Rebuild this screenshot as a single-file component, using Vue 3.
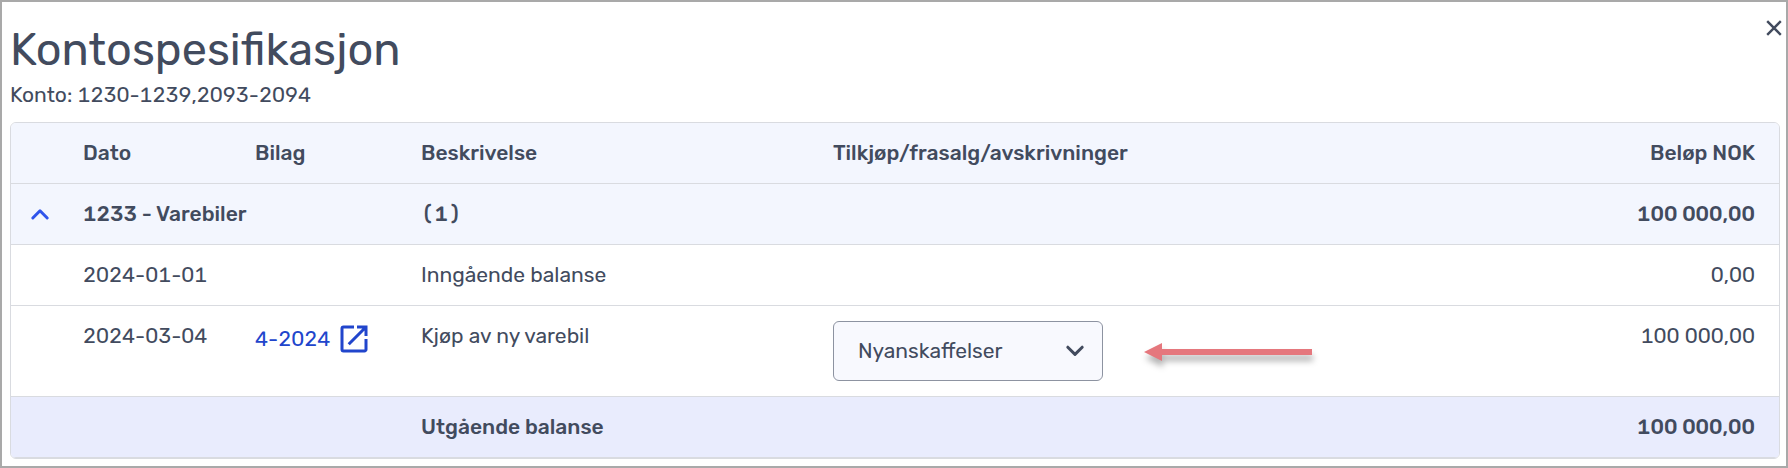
<script setup>
import { ref } from 'vue'

const expanded = ref(true)
const category = ref('Nyanskaffelser')
const categories = ['Nyanskaffelser', 'Tilkjøp', 'Frasalg', 'Avskrivninger']
</script>

<template>
  <section class="dialog" role="dialog" aria-labelledby="dialog-title">
    <header class="head">
      <div class="titles">
        <h1 id="dialog-title">Kontospesifikasjon</h1>
        <p>Konto: 1230-1239,2093-2094</p>
      </div>
      <button class="close" type="button" aria-label="Lukk">
        <svg width="16" height="16" viewBox="0 0 16 16" fill="none" stroke="currentColor" stroke-width="2.4">
          <path d="M1.2 1.2 14.8 14.8M14.8 1.2 1.2 14.8" />
        </svg>
      </button>
    </header>

    <div class="frame">
      <table>
        <colgroup>
          <col class="c-toggle" />
          <col class="c-date" />
          <col class="c-voucher" />
          <col class="c-text" />
          <col />
          <col class="c-amount" />
        </colgroup>
        <thead>
          <tr class="tint">
            <td></td>
            <th scope="col">Dato</th>
            <th scope="col">Bilag</th>
            <th scope="col">Beskrivelse</th>
            <th scope="col">Tilkjøp/frasalg/avskrivninger</th>
            <th scope="col" class="amount">Beløp NOK</th>
          </tr>
        </thead>
        <tbody>
          <tr class="tint strong">
            <td class="toggle">
              <button type="button" aria-label="Vis detaljer" :aria-expanded="expanded" @click="expanded = !expanded">
                <svg width="20" height="14" viewBox="0 0 20 14" fill="none" stroke="currentColor" stroke-width="3" stroke-linecap="round" stroke-linejoin="round">
                  <path d="M2.8 11 10 3.8 17.2 11" />
                </svg>
              </button>
            </td>
            <td colspan="2">1233 - Varebiler</td>
            <td>(1)</td>
            <td></td>
            <td class="amount">100 000,00</td>
          </tr>
          <tr v-if="expanded">
            <td></td>
            <td>2024-01-01</td>
            <td></td>
            <td>Inngående balanse</td>
            <td></td>
            <td class="amount">0,00</td>
          </tr>
          <tr v-if="expanded">
            <td></td>
            <td>2024-03-04</td>
            <td>
              <a class="voucher" href="#">
                4-2024
                <svg width="36" height="36" viewBox="0 0 24 24" fill="currentColor" aria-hidden="true">
                  <path d="M19 19H5V5h7V3H5a2 2 0 0 0-2 2v14a2 2 0 0 0 2 2h14c1.100 0 2-.9 2-2v-7h-2v7zM14 3v2h3.590l-9.830 9.830 1.410 1.410L19 6.410V10h2V3h-7z" />
                </svg>
              </a>
            </td>
            <td>Kjøp av ny varebil</td>
            <td>
              <div class="choice">
                <span class="select">
                  <select v-model="category" aria-label="Tilkjøp/frasalg/avskrivninger">
                    <option v-for="c in categories" :key="c">{{ c }}</option>
                  </select>
                  <svg width="20" height="14" viewBox="0 0 20 14" fill="none" stroke="currentColor" stroke-width="3" stroke-linecap="round" stroke-linejoin="round" aria-hidden="true">
                    <path d="M2.800 3.200 10 10.400 17.200 3.200" />
                  </svg>
                </span>
                <svg class="arrow" width="168" height="20" viewBox="0 0 168 20" aria-hidden="true">
                  <path d="M0 11 18 2v6h150v6H18v6z" fill="#e5777d" />
                </svg>
              </div>
            </td>
            <td class="amount">100 000,00</td>
          </tr>
        </tbody>
        <tfoot>
          <tr class="total strong">
            <td></td>
            <td></td>
            <td></td>
            <td>Utgående balanse</td>
            <td></td>
            <td class="amount">100 000,00</td>
          </tr>
        </tfoot>
      </table>
    </div>
  </section>
</template>

<style>
body {
  margin: 0;
  background: #fff;
}
</style>

<style scoped>
.dialog {
  box-sizing: border-box;
  padding: 0 6px 7px 8px;
  border: 2px solid #a9a9a9;
  background: #fff;
  color: #424b5e;
  font: 400 21px/30px Rubik, Inter, sans-serif;
  font-variant-numeric: tabular-nums;
}

.head {
  display: flex;
  justify-content: space-between;
  align-items: flex-start;
  padding: 18px 0 12px;
}

.titles {
  padding-top: 2px;
}

h1 {
  margin: 0 0 2px;
  font-size: 45px;
  line-height: 56px;
  font-weight: 400;
}

p {
  margin: 0;
}

button {
  display: flex;
  padding: 0;
  border: 0;
  background: none;
  color: inherit;
  cursor: pointer;
}

.close {
  margin-right: -2px;
}

.frame {
  overflow: hidden;
  border: 1px solid #d9dbe0;
  border-radius: 6px;
}

table {
  width: 100%;
  table-layout: fixed;
  border-collapse: separate;
  border-spacing: 0;
}

.c-toggle {
  width: 48px;
}

.c-date {
  width: 172px;
}

.c-voucher {
  width: 166px;
}

.c-text {
  width: 412px;
}

.c-amount {
  width: 240px;
}

th,
td {
  padding: 15px 0 15px 24px;
  border-bottom: 1px solid #d9dbe0;
  text-align: left;
  vertical-align: top;
  white-space: nowrap;
}

th,
.strong td {
  font-weight: 500;
}

.tint {
  background: #f3f6fe;
}

.total {
  background: #e9ecfd;
}

th.amount,
td.amount {
  padding-right: 24px;
  text-align: right;
}

td.toggle {
  padding-left: 19px;
}

.toggle button {
  height: 30px;
  align-items: center;
  color: #2f54eb;
}

.voucher {
  display: flex;
  align-items: center;
  gap: 6px;
  height: 36px;
  color: #2145cc;
  text-decoration: none;
}

.choice {
  display: flex;
  align-items: center;
  gap: 41px;
}

.select {
  position: relative;
  display: flex;
}

select {
  box-sizing: border-box;
  width: 270px;
  height: 60px;
  padding: 0 48px 0 24px;
  appearance: none;
  border: 1px solid #8d93a1;
  border-radius: 6px;
  background: #f8f9fe;
  color: inherit;
  font: inherit;
}

.select svg {
  position: absolute;
  top: 23px;
  right: 18px;
  pointer-events: none;
}

.arrow {
  overflow: visible;
  filter: drop-shadow(1px 6px 3px rgba(0, 0, 0, 0.3));
}
</style>
